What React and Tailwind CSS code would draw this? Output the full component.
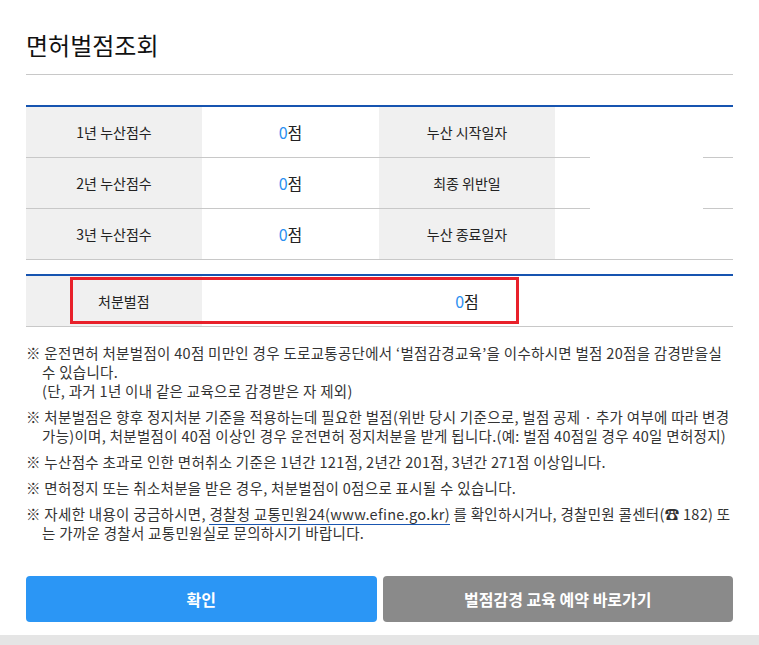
export default function App() {
  const font = { fontFamily: '"Noto Sans CJK KR","Noto Sans",sans-serif' };
  const rows = [
    ["1년 누산점수", "누산 시작일자"],
    ["2년 누산점수", "최종 위반일"],
    ["3년 누산점수", "누산 종료일자"],
  ];
  const notes = [
    <>※ 운전면허 처분벌점이 40점 미만인 경우 도로교통공단에서 ‘벌점감경교육’을 이수하시면 벌점 20점을 감경받을실 수 있습니다.<br />(단, 과거 1년 이내 같은 교육으로 감경받은 자 제외)</>,
    <>※ 처분벌점은 향후 정지처분 기준을 적용하는데 필요한 벌점(위반 당시 기준으로, 벌점 공제 · 추가 여부에 따라 변경 가능)이며, 처분벌점이 40점 이상인 경우 운전면허 정지처분을 받게 됩니다.(예: 벌점 40점일 경우 40일 면허정지)</>,
    <>※ 누산점수 초과로 인한 면허취소 기준은 1년간 121점, 2년간 201점, 3년간 271점 이상입니다.</>,
    <>※ 면허정지 또는 취소처분을 받은 경우, 처분벌점이 0점으로 표시될 수 있습니다.</>,
    <>※ 자세한 내용이 궁금하시면, <span className="border-b border-[#1a56b0]">경찰청 교통민원24(www.efine.go.kr)</span> 를 확인하시거나, 경찰민원 콜센터(☎ 182) 또는 가까운 경찰서 교통민원실로 문의하시기 바랍니다.</>,
  ];
  return (
    <div className="w-[759px] h-[645px] bg-white overflow-hidden flex flex-col text-[#222]" style={font}>
      <div className="px-[26px] flex-1">
        <h1 className="text-[24px] leading-none pt-[33px] pb-[17px] border-b border-[#c8c8c8] text-[#111]">면허벌점조회</h1>
        <div className="mt-[30px] border-t-2 border-[#1654b0] flex text-[14px]">
          <div className="flex-1">
            {rows.map((r, i) => (
              <div key={i} className="flex h-[51px] border-b border-[#c8c8c8]">
                <div className="w-[176px] bg-[#f0f0f0] flex items-center justify-center">{r[0]}</div>
                <div className="w-[177px] flex items-center justify-center text-[16px]"><span className="text-[#2b8ff0]">0</span>점</div>
                <div className="w-[176px] bg-[#f0f0f0] flex items-center justify-center">{r[1]}</div>
              </div>
            ))}
          </div>
          <div className="w-[178px] flex flex-col">
            <div className="h-[51px] flex items-end justify-between"><div className="w-[35px] border-b border-[#c8c8c8]" /><div className="w-[30px] border-b border-[#c8c8c8]" /></div>
            <div className="h-[51px] flex items-end justify-between"><div className="w-[35px] border-b border-[#c8c8c8]" /><div className="w-[30px] border-b border-[#c8c8c8]" /></div>
            <div className="h-[51px] border-b border-[#c8c8c8]" />
          </div>
        </div>
        <div className="mt-[14px] border-t-2 border-[#1654b0] border-b border-b-[#c8c8c8] flex h-[53px] text-[14px] relative">
          <div className="w-[176px] bg-[#f0f0f0] flex items-center pl-[72px]">처분벌점</div>
          <div className="flex-1 flex items-center justify-center pr-[1px] text-[16px]"><span className="text-[#2b8ff0]">0</span>점</div>
          <div className="absolute left-[44px] top-[1px] w-[449px] h-[47px] border-[3px] border-[#e8202a]" />
        </div>
        <div className="mt-[16px] text-[14.5px] leading-[19px] text-[#333] flex flex-col gap-[7px]">
          {notes.map((n, i) => (
            <p key={i} className="pl-[16px] -indent-[16px]" style={{ letterSpacing: "0.3px" }}>{n}</p>
          ))}
        </div>
        <div className="mt-[34px] flex gap-[6px]">
          <button className="flex-1 h-[46px] rounded bg-[#2b96f5] text-white text-[16px] font-bold">확인</button>
          <button className="flex-1 h-[46px] rounded bg-[#8a8a8a] text-white text-[16px] font-bold">벌점감경 교육 예약 바로가기</button>
        </div>
      </div>
      <div className="h-[10px] bg-[#e5e5e5]" />
    </div>
  );
}
